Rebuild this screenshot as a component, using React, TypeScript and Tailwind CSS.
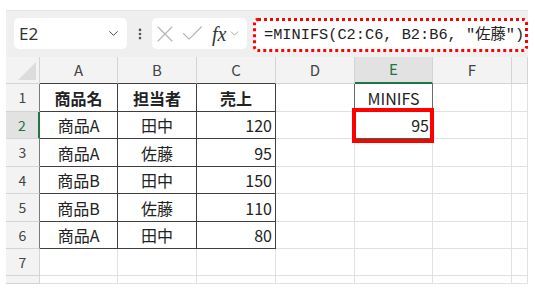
import { ChevronDown, EllipsisVertical, X, Check } from "lucide-react";

const COLS = ["A", "B", "C", "D", "E", "F", ""];
const COL_W = ["w-[78px]", "w-[79px]", "w-[79px]", "w-[79px]", "w-[78px]", "w-[79px]", "w-[16px]"];
const ROW_H = ["h-[28px]", "h-[27px]", "h-[28px]", "h-[27px]", "h-[28px]", "h-[27px]", "h-[27px]", "h-[8px]"];

// sheet contents (A..C table, E1:E2 formula)
const DATA: string[][] = [
  ["商品名", "担当者", "売上", "", "MINIFS", "", ""],
  ["商品A", "田中", "120", "", "95", "", ""],
  ["商品A", "佐藤", "95", "", "", "", ""],
  ["商品B", "田中", "150", "", "", "", ""],
  ["商品B", "佐藤", "110", "", "", "", ""],
  ["商品A", "田中", "80", "", "", "", ""],
  ["", "", "", "", "", "", ""],
  ["", "", "", "", "", "", ""],
];

const FONT = "font-['Noto_Sans_CJK_JP',sans-serif]";

function cellClass(r: number, c: number) {
  const inTable = r <= 5 && c <= 2;
  const base = "flex items-center border-r border-b shrink-0 text-[16px] text-[#222] leading-none";
  let border = "border-[#e1e1e1]";
  if (inTable) border = "border-[#3f3f3f]";
  if (r === 0 && c === 4) border = "border-[#6b6b6b]";
  if (r === 1 && c === 4) border = "border-r-[#e1e1e1] border-b-[#217346]";
  if (r === 0 && c === 3) border = "border-b-[#e1e1e1] border-r-[#6b6b6b]";
  let align = "justify-center";
  if (c === 2 && r > 0) align = "justify-end pr-[3px]";
  if (c === 4 && r === 1) align = "justify-end pr-[3px]";
  const weight = r === 0 && c <= 2 ? "font-bold" : "";
  return `${base} ${border} ${align} ${weight}`;
}

export default function App() {
  return (
    <div className={`w-[535px] h-[291px] bg-white pt-[10px] pl-[6px] overflow-hidden ${FONT}`}>
      <div className="w-[522px]">
        {/* Formula bar */}
        <div className="h-[47px] bg-[#efefef] border-t border-[#e4e4e4] flex items-start pt-[7px] pl-[8px]">
          <div className="w-[113px] h-[31px] bg-white rounded-[5px] flex items-center justify-between pl-[5px] pr-[6px]">
            <span className="text-[17px] text-[#333] font-['Noto_Sans',sans-serif]">E2</span>
            <ChevronDown className="w-[15px] h-[15px] text-[#444]" strokeWidth={1.6} />
          </div>
          <div className="w-[25px] h-[31px] flex items-center justify-center">
            <EllipsisVertical className="w-[14px] h-[14px] text-[#555]" strokeWidth={2.6} />
          </div>
          <div className="w-[95px] h-[31px] bg-white rounded-[5px] flex items-center">
            <X className="w-[28px] h-[28px] text-[#b5b5b5] -ml-[1px]" strokeWidth={1} />
            <Check className="w-[27px] h-[27px] text-[#b5b5b5]" strokeWidth={1} />
            <div className="flex items-center gap-[2px] ml-[6px]">
              <span className="font-['Liberation_Serif',serif] italic text-[20px] text-[#333] leading-none">fx</span>
              <ChevronDown className="w-[13px] h-[13px] text-[#999]" strokeWidth={1.6} />
            </div>
          </div>
          <div className="ml-[6px] w-[275px] h-[34px] bg-white rounded-[5px] border-[3px] border-dotted border-[#ff0000] flex items-center pl-[8px]">
            <span className="font-['Liberation_Mono','Noto_Sans_CJK_JP',monospace] text-[15.3px] text-[#222] whitespace-nowrap">
              =MINIFS(C2:C6, B2:B6, "佐藤")
            </span>
          </div>
        </div>

        {/* Sheet grid */}
        <div className="relative">
          <div className="flex h-[27px] bg-[#f3f3f3]">
            <div className="w-[34px] shrink-0 border-r border-b border-[#d4d4d4] relative">
              <svg className="absolute right-[3px] bottom-[3px]" width="18" height="18" viewBox="0 0 18 18">
                <polygon points="18,0 18,18 0,18" fill="#dcdcdc" />
              </svg>
            </div>
            {COLS.map((c, i) => (
              <div
                key={i}
                className={`${COL_W[i]} shrink-0 flex items-center justify-center text-[15px] border-r ${
                  i === 4
                    ? "bg-[#e2e2e2] text-[#217346] border-b-2 border-b-[#217346] border-r-[#d4d4d4]"
                    : i <= 2
                    ? "text-[#444] border-b border-b-[#3f3f3f] border-r-[#d4d4d4]"
                    : "text-[#444] border-b border-[#d4d4d4]"
                }`}
              >
                {c}
              </div>
            ))}
          </div>

          {DATA.map((row, r) => (
            <div key={r} className={`flex ${ROW_H[r]} overflow-hidden`}>
              <div
                className={`w-[34px] shrink-0 flex items-center justify-center text-[14px] border-b border-[#d4d4d4] ${
                  r === 1
                    ? "bg-[#e2e2e2] text-[#217346] border-r-2 border-r-[#217346]"
                    : r <= 5
                    ? "bg-[#f3f3f3] text-[#444] border-r border-r-[#7a7a7a]"
                    : "bg-[#f3f3f3] text-[#444] border-r"
                }`}
              >
                {r < 7 ? r + 1 : ""}
              </div>
              {row.map((v, c) => (
                <div key={c} className={`${COL_W[c]} ${cellClass(r, c)}`}>
                  {v}
                </div>
              ))}
            </div>
          ))}

          {/* highlight around E2 */}
          <div className="absolute left-[346px] top-[51px] w-[82px] h-[35px] border-[4px] border-[#ff0000]" />
        </div>
      </div>
    </div>
  );
}
